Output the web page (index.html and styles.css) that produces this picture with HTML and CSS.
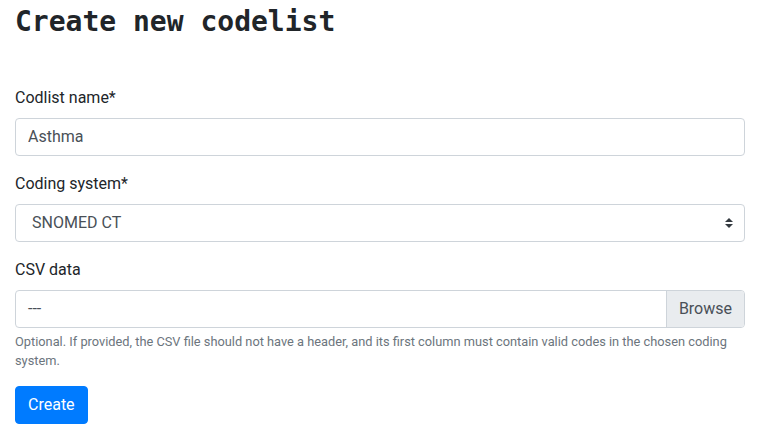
FILE: index.html
```html
<!DOCTYPE html>
<html lang="en">
<head>
<meta charset="utf-8">
<title>Create new codelist</title>
<link rel="stylesheet" href="styles.css">
</head>
<body>
<main class="container">
  <h1 class="title">Create new codelist</h1>
  <form class="form">
    <div class="form-group">
      <label class="label" for="name">Codlist name*</label>
      <input class="control" id="name" type="text" value="Asthma">
    </div>
    <div class="form-group">
      <label class="label" for="system">Coding system*</label>
      <div class="select-wrap">
        <select class="control select" id="system">
          <option>SNOMED CT</option>
        </select>
        <svg class="select-arrow" width="8" height="10" viewBox="0 0 4 5"><path fill="#343a40" d="M2 0L0 2h4zm0 5L0 3h4z"/></svg>
      </div>
    </div>
    <div class="form-group">
      <label class="label">CSV data</label>
      <div class="file">
        <span class="file-name">---</span>
        <span class="file-browse">Browse</span>
      </div>
      <small class="help">Optional. If provided, the CSV file should not have a header, and its first column must contain valid codes in the chosen coding system.</small>
    </div>
    <button type="button" class="btn">Create</button>
  </form>
</main>
</body>
</html>
```

FILE: styles.css
```css
* { box-sizing: border-box; }
html, body { margin: 0; padding: 0; }
body {
  font-family: Roboto, "Noto Sans", "Liberation Sans", sans-serif;
  font-size: 16px;
  line-height: 1.5;
  color: #212529;
  background: #fff;
}
.container {
  max-width: 760px;
  padding: 0 15px;
}
.title {
  font-family: "DejaVu Sans Mono", "Liberation Mono", monospace;
  font-weight: 700;
  font-size: 28px;
  line-height: 1.2;
  margin: 5px 0 47px;
  letter-spacing: 0;
}
.form-group { margin-bottom: 16px; }
.label {
  display: inline-block;
  margin-bottom: 8px;
}
.control {
  display: block;
  width: 100%;
  height: 38px;
  padding: 6px 12px;
  font-family: inherit;
  font-size: 16px;
  line-height: 1.5;
  color: #495057;
  background: #fff;
  border: 1px solid #ced4da;
  border-radius: 4px;
  margin: 0;
}
.select-wrap { position: relative; }
.select {
  appearance: none;
  -webkit-appearance: none;
  padding: 6px 28px 6px 16px;
}
.select-arrow {
  position: absolute;
  right: 12px;
  top: 14px;
  pointer-events: none;
}
.file {
  display: flex;
  height: 38px;
  border: 1px solid #ced4da;
  border-radius: 4px;
  overflow: hidden;
  color: #495057;
}
.file-name {
  flex: 1;
  padding: 6px 12px;
}
.file-browse {
  padding: 6px 12px;
  background: #e9ecef;
  border-left: 1px solid #ced4da;
}
.help {
  display: block;
  margin-top: 4px;
  font-size: 12.8px;
  line-height: 1.5;
  color: #6c757d;
}
.btn {
  display: inline-block;
  font-family: inherit;
  font-size: 16px;
  line-height: 1.5;
  padding: 6px 12px;
  color: #fff;
  background: #007bff;
  border: 1px solid #007bff;
  border-radius: 4px;
  cursor: pointer;
}
```
